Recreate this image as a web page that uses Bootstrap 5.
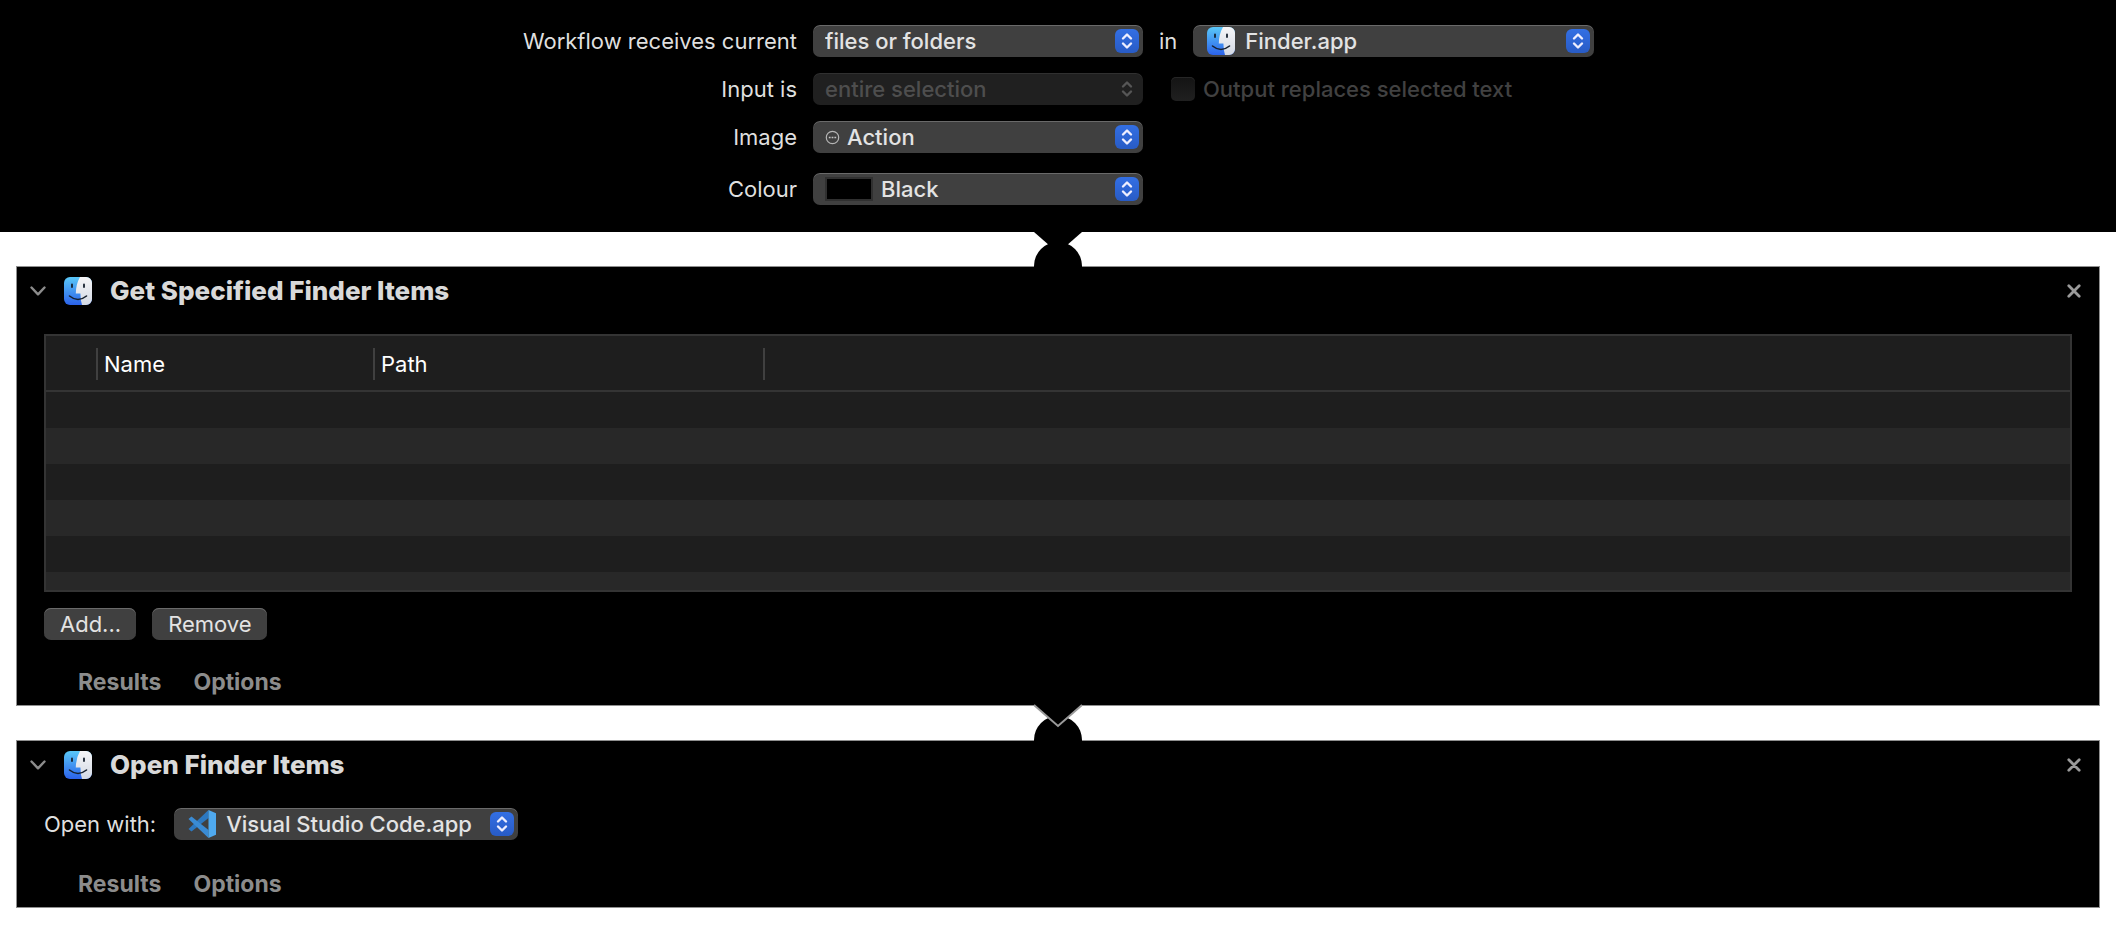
<!DOCTYPE html>
<html lang="en">
<head>
<meta charset="utf-8">
<meta name="viewport" content="width=device-width, initial-scale=1">
<title>Quick Action workflow</title>
<link rel="stylesheet" href="https://cdn.jsdelivr.net/npm/bootstrap@5.3.0/dist/css/bootstrap.min.css">
<style>
  body { font-family: Inter, "Liberation Sans", sans-serif; font-size: 22px; line-height: 32px; color: #dfdfdf; background: #fff; }
  .workflow-input { background: #000; padding: 25px 16px 27px; }
  .input-grid { display: grid; grid-template-columns: 275px 330px 435px; column-gap: 16px; row-gap: 16px; justify-content: center; }
  .input-grid > label { text-align: right; white-space: nowrap; }
  .popup { position: relative; height: 32px; }
  .popup select {
    appearance: none; display: block; width: 100%; height: 32px; padding: 0 34px 0 12px; border: 0; border-radius: 7px;
    color: #e3e3e3; font-weight: 500; line-height: 32px; box-shadow: inset 0 1px #6a6a6a;
    background: #404040 url("data:image/svg+xml,%3Csvg xmlns='http://www.w3.org/2000/svg' width='24' height='24'%3E%3Cdefs%3E%3ClinearGradient id='g' x2='0' y2='1'%3E%3Cstop stop-color='%23336fe4'/%3E%3Cstop offset='1' stop-color='%23285bc5'/%3E%3C/linearGradient%3E%3C/defs%3E%3Crect width='24' height='24' rx='6' fill='url(%23g)'/%3E%3Cpath d='M8 9.500l4-4 4 4M8 14.500l4 4 4-4' fill='none' stroke='%23eef' stroke-width='2.400' stroke-linecap='round' stroke-linejoin='round'/%3E%3C/svg%3E") no-repeat right 4px center;
  }
  .popup select:disabled {
    color: #4e4e4e; opacity: 1; box-shadow: inset 0 1px #303030;
    background: #202020 url("data:image/svg+xml,%3Csvg xmlns='http://www.w3.org/2000/svg' width='24' height='24'%3E%3Cpath d='M8 9.500l4-4 4 4M8 14.500l4 4 4-4' fill='none' stroke='%23565656' stroke-width='2.400' stroke-linecap='round' stroke-linejoin='round'/%3E%3C/svg%3E") no-repeat right 4px center;
  }
  .popup-art { position: absolute; left: 12px; top: 0; height: 32px; display: flex; align-items: center; pointer-events: none; }
  .popup.with-app .popup-art { left: 14px; }
  .popup.with-app select { padding-left: 52px; }
  .popup.with-glyph select { padding-left: 34px; }
  .popup.with-swatch select { padding-left: 68px; }
  .opener { width: 344px; }
  .swatch { width: 48px; height: 24px; background: #000; border: 2px solid #303030; }
  .tick { appearance: none; width: 24px; height: 24px; margin: 0; border-radius: 5px; background: linear-gradient(#141414, #202020); box-shadow: inset 0 1px #262626; }
  .tick-label { color: #414141; font-weight: 500; }
  .link-gap { height: 34px; position: relative; z-index: 1; }
  .link-gap svg { display: block; margin: 0 auto; overflow: visible; }
  .action { margin: 0 16px; border: 1px solid #8f8f8f; background: #000; padding: 0 27px; }
  .action-head { height: 48px; margin: 0 -14px; padding-right: 5px; gap: 18px; }
  .action-title { font-size: 26px; line-height: 32px; font-weight: 800; color: #d9d9d9; }
  .plain { background: none; border: 0; padding: 0; color: #8c8c8c; display: flex; }
  .items-box { margin-top: 19px; height: 258px; border: 2px solid #343434; overflow: hidden; background: #1e1e1e; }
  .items { width: 100%; table-layout: fixed; border-collapse: separate; border-spacing: 0; }
  .items th { height: 56px; padding: 2px 0 0 8px; font-weight: 400; color: #fff; border-bottom: 2px solid #343434; }
  .items th + th { background: linear-gradient(#404040, #404040) no-repeat left 12px / 2px 32px; }
  .items td { height: 36px; padding: 0; }
  .items tbody tr:nth-child(even) { background: #282828; }
  .push { height: 32px; border: 0; border-radius: 7px; background: #404040; color: #e3e3e3; padding: 0 15px 0 16px; line-height: 32px; box-shadow: inset 0 1px #6a6a6a; }
  .open-row { gap: 18px; margin: 19px 0 18px; }
  .foot { padding: 3px 34px 0; gap: 32px; height: 49px; }
  .foot .plain { font-size: 23px; font-weight: 700; }
</style>
</head>
<body>
<svg width="0" height="0" class="position-absolute" aria-hidden="true">
  <defs>
    <linearGradient id="fBlue" x2="0" y2="1"><stop stop-color="#5ac8f8"/><stop offset="1" stop-color="#2b62ea"/></linearGradient>
    <linearGradient id="fGrey" x2="0" y2="1"><stop stop-color="#f6f6f8"/><stop offset="1" stop-color="#d3d9e4"/></linearGradient>
    <symbol id="finder" viewBox="0 0 28 28">
      <rect width="28" height="28" rx="6" fill="url(#fBlue)"/>
      <path d="M16 0h6a6 6 0 0 1 6 6v16a6 6 0 0 1-6 6h-4q-1.500-5-1.600-11.500h-4.600Q12 7 16 0z" fill="url(#fGrey)"/>
      <path d="M8 7.500v2.600M20 7.500v2.600" stroke="#16202e" stroke-width="1.800" stroke-linecap="round"/>
      <path d="M5.500 19q8.500 7 17 0" fill="none" stroke="#16202e" stroke-width="1.600" stroke-linecap="round"/>
    </symbol>
    <symbol id="chev" viewBox="0 0 16 10"><path d="M1.500 1.500 8 8.300l6.500-6.800" fill="none" stroke="#8c8c8c" stroke-width="2.400" stroke-linecap="round" stroke-linejoin="round"/></symbol>
    <symbol id="cross" viewBox="0 0 14 14"><path d="M1.800 1.800l10.400 10.400M12.200 1.800 1.800 12.200" stroke="#9a9a9a" stroke-width="2.800" stroke-linecap="round"/></symbol>
  </defs>
</svg>

<form class="workflow-input">
  <div class="input-grid">
    <label for="receives">Workflow receives current</label>
    <div class="popup"><select id="receives"><option>files or folders</option></select></div>
    <div class="d-flex gap-3">
      <label for="app">in</label>
      <div class="popup with-app flex-grow-1">
        <select id="app"><option>Finder.app</option></select>
        <span class="popup-art"><svg width="28" height="28"><use href="#finder"/></svg></span>
      </div>
    </div>

    <label for="selection">Input is</label>
    <div class="popup"><select id="selection" disabled><option>entire selection</option></select></div>
    <div class="d-flex align-items-center gap-2 ps-2 ms-1">
      <input class="tick" type="checkbox" id="replaces" disabled>
      <label class="tick-label" for="replaces">Output replaces selected text</label>
    </div>

    <label for="image">Image</label>
    <div class="popup with-glyph">
      <select id="image"><option>Action</option></select>
      <span class="popup-art"><svg width="15" height="15" viewBox="0 0 15 15"><circle cx="7.500" cy="7.500" r="6.200" fill="none" stroke="#b5b5b5" stroke-width="1.200"/><path d="M3.800 7.500h1.800M6.600 7.500h1.800M9.400 7.500h1.800" stroke="#c4c4c4" stroke-width="1.600"/></svg></span>
    </div>
    <span></span>

    <label class="mt-1" for="colour">Colour</label>
    <div class="popup with-swatch mt-1">
      <select id="colour"><option>Black</option></select>
      <span class="popup-art"><span class="swatch"></span></span>
    </div>
  </div>
</form>

<div class="link-gap"><svg width="48" height="34" aria-hidden="true"><path d="M0 34a24 24 0 0 1 48 0v1H0z"/><path d="M0 0 24 21 48 0v-1H0z"/></svg></div>

<section class="action">
  <header class="action-head d-flex align-items-center">
    <button class="plain" type="button" aria-label="Collapse"><svg width="16" height="10"><use href="#chev"/></svg></button>
    <svg width="28" height="28"><use href="#finder"/></svg>
    <h2 class="action-title m-0 flex-grow-1">Get Specified Finder Items</h2>
    <button class="plain" type="button" aria-label="Remove action"><svg width="14" height="14"><use href="#cross"/></svg></button>
  </header>
  <div class="items-box">
    <table class="items">
      <colgroup><col style="width:50px"><col style="width:277px"><col style="width:390px"><col></colgroup>
      <thead><tr><th></th><th>Name</th><th>Path</th><th></th></tr></thead>
      <tbody>
        <tr><td colspan="4"></td></tr><tr><td colspan="4"></td></tr><tr><td colspan="4"></td></tr>
        <tr><td colspan="4"></td></tr><tr><td colspan="4"></td></tr><tr><td colspan="4"></td></tr>
      </tbody>
    </table>
  </div>
  <div class="d-flex gap-3 my-3">
    <button class="push" type="button">Add...</button>
    <button class="push" type="button">Remove</button>
  </div>
  <footer class="foot d-flex align-items-center">
    <button class="plain" type="button">Results</button>
    <button class="plain" type="button">Options</button>
  </footer>
</section>

<div class="link-gap"><svg width="48" height="34" aria-hidden="true"><path d="M0 34a24 24 0 0 1 48 0v1H0z"/><path d="M0-1 24 20 48-1v-1H0z"/><path d="M0-1 24 20 48-1" fill="none" stroke="#9a9a9a" stroke-width="2"/></svg></div>

<section class="action mb-4">
  <header class="action-head d-flex align-items-center">
    <button class="plain" type="button" aria-label="Collapse"><svg width="16" height="10"><use href="#chev"/></svg></button>
    <svg width="28" height="28"><use href="#finder"/></svg>
    <h2 class="action-title m-0 flex-grow-1">Open Finder Items</h2>
    <button class="plain" type="button" aria-label="Remove action"><svg width="14" height="14"><use href="#cross"/></svg></button>
  </header>
  <div class="open-row d-flex">
    <label for="openwith">Open with:</label>
    <div class="popup with-app opener">
      <select id="openwith"><option>Visual Studio Code.app</option></select>
      <span class="popup-art"><svg width="28" height="28" viewBox="0 0 28 28"><path d="M20.500 0v8L3.500 21.500.500 19z" fill="#2c78c0"/><path d="M.500 9l3-2.500 17 13.500v8z" fill="#3a8bd4"/><path d="M20.500 0 28 3.200v21.600L20.500 28z" fill="#4fa9ee"/></svg></span>
    </div>
  </div>
  <footer class="foot d-flex align-items-center">
    <button class="plain" type="button">Results</button>
    <button class="plain" type="button">Options</button>
  </footer>
</section>
<script src="https://cdn.jsdelivr.net/npm/bootstrap@5.3.0/dist/js/bootstrap.bundle.min.js"></script>
</body>
</html>
